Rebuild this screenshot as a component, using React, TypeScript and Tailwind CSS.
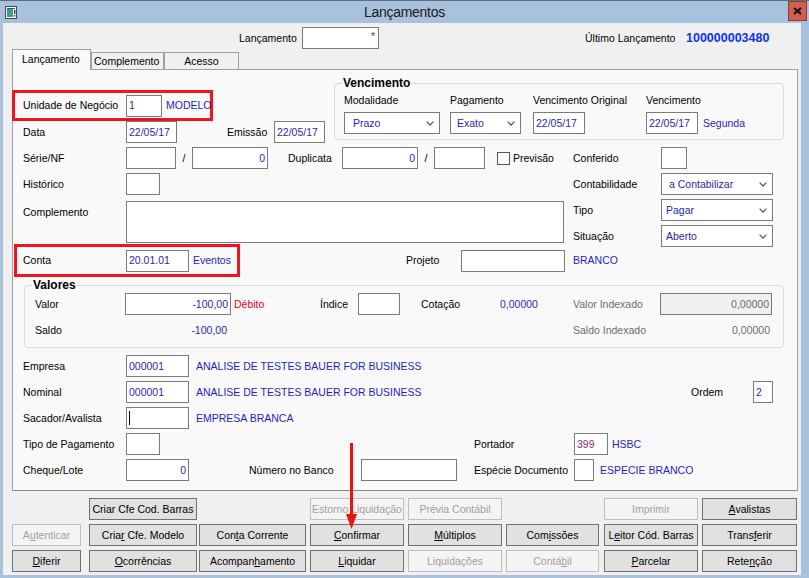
import type { ReactNode } from "react"

const valueText = "text-[#2a1fae]"
const linkText = "text-[#1f1fc4]"

function Input({
  w,
  children,
  right,
  bg = "bg-white",
  color = valueText,
  className = "",
}: {
  w: string
  children?: ReactNode
  right?: boolean
  bg?: string
  color?: string
  className?: string
}) {
  return (
    <div
      className={`flex h-[22px] shrink-0 items-center border border-[#7a7a7a] ${bg} ${color} ${right ? "justify-end pr-[2px]" : "pl-[2px]"} ${w} ${className}`}
    >
      {children}
    </div>
  )
}

function Select({ w, value, pad = "pl-[6px]" }: { w: string; value: string; pad?: string }) {
  return (
    <div className={`flex h-[22px] shrink-0 items-center justify-between border border-[#7a7a7a] bg-white pr-[5px] ${pad} ${valueText} ${w}`}>
      <span>{value}</span>
      <svg width="8" height="5" viewBox="0 0 8 5">
        <path d="M0.6 0.6 L4 4 L7.4 0.6" stroke="#5a5a5a" strokeWidth="1.3" fill="none" />
      </svg>
    </div>
  )
}

function Group({ title, className, children }: { title: string; className: string; children: ReactNode }) {
  return (
    <div className={`relative shrink-0 rounded-[4px] border border-[#d4dbe5] ${className}`}>
      <span className="absolute -top-[9px] left-[7px] bg-[#f9f9f9] px-[1px] text-[12px] font-bold leading-[16px]">{title}</span>
      {children}
    </div>
  )
}

type Btn = { label: ReactNode; w: string; pos: string; off?: boolean }

const buttons: Btn[] = [
  { label: "Criar Cfe Cod. Barras", w: "w-[108px]", pos: "col-start-2 row-start-1" },
  { label: <>Estorno <u>L</u>iquidação</>, w: "w-[94px]", pos: "col-start-4 row-start-1", off: true },
  { label: "Prévia Contábil", w: "w-[94px]", pos: "col-start-5 row-start-1", off: true },
  { label: "Imprimir", w: "w-[94px]", pos: "col-start-7 row-start-1", off: true },
  { label: <><u>A</u>valistas</>, w: "w-[95px]", pos: "col-start-8 row-start-1" },

  { label: <>A<u>u</u>tenticar</>, w: "w-[69px]", pos: "col-start-1 row-start-2", off: true },
  { label: <>Cria<u>r</u> Cfe. Modelo</>, w: "w-[108px]", pos: "col-start-2 row-start-2" },
  { label: <>Con<u>t</u>a Corrente</>, w: "w-[107px]", pos: "col-start-3 row-start-2" },
  { label: <><u>C</u>onfirmar</>, w: "w-[94px]", pos: "col-start-4 row-start-2" },
  { label: <><u>M</u>últiplos</>, w: "w-[94px]", pos: "col-start-5 row-start-2" },
  { label: <>Com<u>i</u>ssões</>, w: "w-[93px]", pos: "col-start-6 row-start-2" },
  { label: <>L<u>e</u>itor Cód. Barras</>, w: "w-[94px]", pos: "col-start-7 row-start-2" },
  { label: <>Trans<u>f</u>erir</>, w: "w-[95px]", pos: "col-start-8 row-start-2" },

  { label: <><u>D</u>iferir</>, w: "w-[69px]", pos: "col-start-1 row-start-3" },
  { label: <><u>O</u>corrências</>, w: "w-[108px]", pos: "col-start-2 row-start-3" },
  { label: <>Acompan<u>h</u>amento</>, w: "w-[107px]", pos: "col-start-3 row-start-3" },
  { label: <><u>L</u>iquidar</>, w: "w-[94px]", pos: "col-start-4 row-start-3" },
  { label: "Liquidações", w: "w-[94px]", pos: "col-start-5 row-start-3", off: true },
  { label: <>Contá<u>b</u>il</>, w: "w-[93px]", pos: "col-start-6 row-start-3", off: true },
  { label: <><u>P</u>arcelar</>, w: "w-[94px]", pos: "col-start-7 row-start-3" },
  { label: <>Rete<u>n</u>ção</>, w: "w-[95px]", pos: "col-start-8 row-start-3" },
]

function TitleBar() {
  return (
    <div className="flex h-[22px] shrink-0 items-center">
      <div className="flex w-[21px] shrink-0 justify-center">
        <svg width="12" height="13" viewBox="0 0 12 13">
          <rect x="0.5" y="0.5" width="11" height="12" fill="#ffffff" stroke="#3d4a57" />
          <rect x="2" y="3" width="6" height="8" fill="#3f9f86" />
          <rect x="2" y="2" width="8" height="1" fill="#2f5a7a" />
          <rect x="9" y="4" width="1.5" height="4" fill="#3d4a57" />
          <rect x="9" y="9" width="1.5" height="1.5" fill="#3d4a57" />
        </svg>
      </div>
      <div className="flex-1 text-center text-[14px] tracking-[-0.3px] text-[#1a1a1a]">Lançamentos</div>
      <div className="mr-[2px] flex h-[20px] w-[19px] shrink-0 items-center justify-center self-start border border-[#8e3d33] bg-[#d15f4e]">
        <svg width="9" height="8" viewBox="0 0 9 8">
          <path d="M1 1 L8 7 M8 1 L1 7" stroke="#111" strokeWidth="2" />
        </svg>
      </div>
    </div>
  )
}

export default function App() {
  return (
    <div className="relative flex h-[578px] w-[809px] flex-col overflow-hidden border-t border-[#5f6f82] bg-[#a8c1dc] font-['Liberation_Sans',Arial,sans-serif] text-[10.5px] leading-[13px] text-black">
      <TitleBar />
      <div className="mb-[3px] ml-[3px] mr-[8px] flex flex-1 flex-col bg-[#f0f0f0]">
        {/* header */}
        <div className="mt-[4px] flex h-[22px] items-center">
          <span className="ml-[236px] w-[63px] shrink-0">Lançamento</span>
          <Input w="w-[77px]" className="items-start justify-end pr-[3px] pt-[2px]">
            <span className="text-[#3030ff]">*</span>
          </Input>
          <span className="ml-[206px] w-[101px] shrink-0">Último Lançamento</span>
          <span className="text-[12.5px] font-bold text-[#0a32f0]">100000003480</span>
        </div>

        {/* tabs */}
        <div className="relative z-10 ml-[9px] flex h-[20px] items-end">
          <div className="-mb-px h-[21px] w-[79px] border border-b-0 border-[#a0a0a0] bg-[#f9f9f9] pl-[9px] pt-[3px]">Lançamento</div>
          <div className="flex h-[17px] w-[73px] items-center border border-b-0 border-[#a0a0a0] pl-[2px]">Complemento</div>
          <div className="flex h-[17px] w-[75px] items-center justify-center border border-b-0 border-[#a0a0a0]">Acesso</div>
        </div>

        {/* panel */}
        <div className="ml-[9px] flex h-[422px] w-[786px] shrink-0 flex-col border border-[#a0a0a0] border-b-[#8a8a8a] bg-[#f9f9f9]">
          <div className="flex items-start">
            <div className="w-[321px] shrink-0">
              <div className="-ml-px mt-[20px] flex h-[31px] w-[201px] items-center border-[3px] border-[#f0141e] pl-[8px]">
                <span className="w-[103px] shrink-0">Unidade de Negócio</span>
                <Input w="w-[36px]">1</Input>
                <span className={`ml-[4px] ${linkText}`}>MODELO</span>
              </div>
              <div className="flex h-[22px] items-center pl-[10px]">
                <span className="w-[103px] shrink-0">Data</span>
                <Input w="w-[51px]">22/05/17</Input>
                <span className="ml-[50px] w-[47px] shrink-0">Emissão</span>
                <Input w="w-[51px]">22/05/17</Input>
              </div>
            </div>
            <Group title="Vencimento" className="mt-[13px] h-[57px] w-[450px]">
              <div className="flex pl-[9px] pt-[9px]">
                <div className="w-[106px] shrink-0">
                  <div className="h-[14px] leading-[14px]">Modalidade</div>
                  <div className="mt-[5px]"><Select w="w-[96px]" value="Prazo" pad="pl-[8px]" /></div>
                </div>
                <div className="w-[83px] shrink-0">
                  <div className="h-[14px] leading-[14px]">Pagamento</div>
                  <div className="mt-[5px]"><Select w="w-[71px]" value="Exato" /></div>
                </div>
                <div className="w-[113px] shrink-0">
                  <div className="h-[14px] leading-[14px]">Vencimento Original</div>
                  <div className="mt-[5px]"><Input w="w-[52px]">22/05/17</Input></div>
                </div>
                <div>
                  <div className="h-[14px] leading-[14px]">Vencimento</div>
                  <div className="mt-[5px] flex items-center">
                    <Input w="w-[52px]">22/05/17</Input>
                    <span className={`ml-[5px] ${linkText}`}>Segunda</span>
                  </div>
                </div>
              </div>
            </Group>
          </div>

          <div className="mt-[4px] flex items-start">
            <div className="w-[560px] shrink-0">
              <div className="flex h-[22px] items-center pl-[10px]">
                <span className="w-[103px] shrink-0">Série/NF</span>
                <Input w="w-[50px]" />
                <span className="w-[16px] shrink-0 text-center">/</span>
                <Input w="w-[76px]" right>0</Input>
                <span className="ml-[20px] w-[54px] shrink-0">Duplicata</span>
                <Input w="w-[76px]" right>0</Input>
                <span className="w-[16px] shrink-0 text-center">/</span>
                <Input w="w-[51px]" />
                <span className="ml-[12px] h-[13px] w-[13px] shrink-0 border border-[#555555] bg-white" />
                <span className="ml-[3px]">Previsão</span>
              </div>
              <div className="mt-[4px] flex h-[22px] items-center pl-[10px]">
                <span className="w-[103px] shrink-0">Histórico</span>
                <Input w="w-[34px]" />
              </div>
              <div className="mt-[6px] flex items-start pl-[10px]">
                <span className="flex h-[22px] w-[103px] shrink-0 items-center">Complemento</span>
                <div className="h-[42px] w-[438px] shrink-0 border border-[#7a7a7a] bg-white" />
              </div>
              <div className="mt-[1px] flex items-center">
                <div className="ml-[1px] flex h-[33px] w-[226px] shrink-0 items-center border-[3px] border-[#f0141e] pl-[6px]">
                  <span className="w-[103px] shrink-0">Conta</span>
                  <Input w="w-[63px]">20.01.01</Input>
                  <span className={`ml-[4px] ${linkText}`}>Eventos</span>
                </div>
                <span className="ml-[166px] w-[55px] shrink-0">Projeto</span>
                <Input w="w-[104px]" />
              </div>
            </div>
            <div className="w-[224px] shrink-0">
              <div className="flex h-[22px] items-center">
                <span className="w-[88px] shrink-0">Conferido</span>
                <Input w="w-[26px]" />
              </div>
              <div className="mt-[4px] flex h-[22px] items-center">
                <span className="w-[88px] shrink-0">Contabilidade</span>
                <Select w="w-[112px]" value="a Contabilizar" pad="pl-[7px]" />
              </div>
              <div className="mt-[4px] flex h-[22px] items-center">
                <span className="w-[88px] shrink-0">Tipo</span>
                <Select w="w-[112px]" value="Pagar" pad="pl-[4px]" />
              </div>
              <div className="mt-[4px] flex h-[22px] items-center">
                <span className="w-[88px] shrink-0">Situação</span>
                <Select w="w-[112px]" value="Aberto" pad="pl-[4px]" />
              </div>
              <div className={`mt-[2px] flex h-[22px] items-center ${linkText}`}>BRANCO</div>
            </div>
          </div>

          <Group title="Valores" className="ml-[11px] mt-[8px] h-[63px] w-[760px]">
            <div className="pl-[10px] pt-[7px]">
              <div className="flex h-[22px] items-center">
                <span className="w-[90px] shrink-0">Valor</span>
                <Input w="w-[106px]" right>-100,00</Input>
                <span className="ml-[3px] w-[86px] shrink-0 text-[#f0001c]">Débito</span>
                <span className="w-[38px] shrink-0">Índice</span>
                <Input w="w-[42px]" />
                <span className="ml-[21px] w-[79px] shrink-0">Cotação</span>
                <span className="w-[42px] shrink-0 text-[#3c1ec0]">0,00000</span>
                <span className="ml-[31px] w-[87px] shrink-0 text-[#6d6d6d]">Valor Indexado</span>
                <Input w="w-[112px]" right bg="bg-[#f0f0f0]" color="text-[#6d6d6d]">0,00000</Input>
              </div>
              <div className="mt-[4px] flex h-[22px] items-center">
                <span className="w-[90px] shrink-0">Saldo</span>
                <span className={`w-[106px] shrink-0 pr-[4px] text-right ${valueText}`}>-100,00</span>
                <span className="ml-[342px] w-[87px] shrink-0 text-[#6d6d6d]">Saldo Indexado</span>
                <span className="w-[112px] shrink-0 pr-[2px] text-right text-[#6d6d6d]">0,00000</span>
              </div>
            </div>
          </Group>

          <div className="mt-[7px] flex flex-col gap-[4px] pl-[10px]">
            <div className="flex h-[22px] items-center">
              <span className="w-[103px] shrink-0">Empresa</span>
              <Input w="w-[63px]">000001</Input>
              <span className={`ml-[7px] ${linkText}`}>ANALISE DE TESTES BAUER FOR BUSINESS</span>
            </div>
            <div className="flex h-[22px] items-center">
              <span className="w-[103px] shrink-0">Nominal</span>
              <Input w="w-[63px]">000001</Input>
              <span className={`ml-[7px] w-[495px] shrink-0 ${linkText}`}>ANALISE DE TESTES BAUER FOR BUSINESS</span>
              <span className="w-[62px] shrink-0">Ordem</span>
              <Input w="w-[20px]">2</Input>
            </div>
            <div className="flex h-[22px] items-center">
              <span className="w-[103px] shrink-0">Sacador/Avalista</span>
              <Input w="w-[63px]">
                <span className="h-[14px] w-px bg-black" />
              </Input>
              <span className={`ml-[7px] ${linkText}`}>EMPRESA BRANCA</span>
            </div>
            <div className="flex h-[22px] items-center">
              <span className="w-[103px] shrink-0">Tipo de Pagamento</span>
              <Input w="w-[34px]" />
              <span className="ml-[314px] w-[100px] shrink-0">Portador</span>
              <Input w="w-[34px]" color="text-[#9a1f78]">399</Input>
              <span className={`ml-[4px] ${linkText}`}>HSBC</span>
            </div>
            <div className="flex h-[22px] items-center">
              <span className="w-[103px] shrink-0">Cheque/Lote</span>
              <Input w="w-[63px]" right>0</Input>
              <span className="ml-[60px] w-[112px] shrink-0">Número no Banco</span>
              <Input w="w-[96px]" />
              <span className="ml-[17px] w-[100px] shrink-0">Espécie Documento</span>
              <Input w="w-[20px]" />
              <span className={`ml-[6px] ${linkText}`}>ESPECIE BRANCO</span>
            </div>
          </div>
        </div>

        {/* buttons */}
        <div className="ml-[9px] mt-[7px] grid grid-cols-[77px_110px_111px_98px_98px_98px_98px_95px] grid-rows-[22px_22px_22px] gap-y-[4px]">
          {buttons.map((b, i) => (
            <button
              key={i}
              className={`flex h-[22px] items-center justify-center border text-[10.5px] leading-[12px] ${
                b.off ? "border-[#bfbfbf] bg-[#f4f4f4] text-[#a0a0a0]" : "border-[#707070] bg-[#e1e1e1] text-black"
              } ${b.w} ${b.pos}`}
            >
              <span>{b.label}</span>
            </button>
          ))}
        </div>
      </div>

      {/* annotation arrow */}
      <svg className="absolute left-[346px] top-[442px]" width="11" height="87" viewBox="0 0 11 87">
        <rect x="4" y="0" width="3" height="74" fill="#ee1111" />
        <polygon points="0,71 11,71 5.5,86" fill="#ee1111" />
      </svg>
    </div>
  )
}
